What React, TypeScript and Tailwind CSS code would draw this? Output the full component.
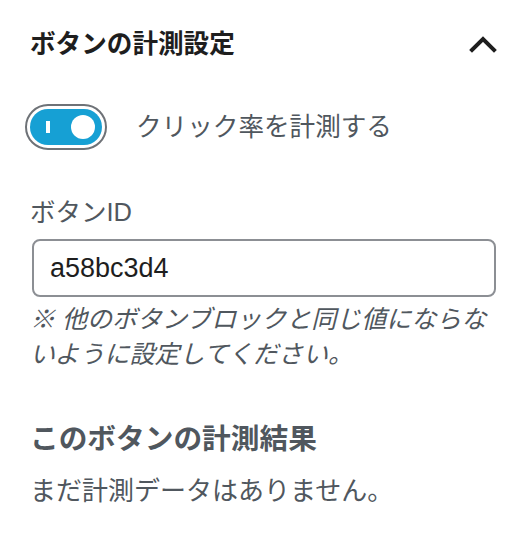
import React, { useState } from 'react';

const ChevronUp: React.FC = () => (
    <svg width="28" height="18" viewBox="0 0 28 18" fill="none">
        <polyline points="3,15 14,4 25,15" stroke="#1e1e1e" strokeWidth="4" strokeLinecap="square" />
    </svg>
);

const App: React.FC = () => {
    const [enabled, setEnabled] = useState(true);
    const [buttonId, setButtonId] = useState('a58bc3d4');

    return (
        <div
            className="w-[524px] h-[552px] bg-white pl-[30px] pr-[27px] pt-[28px] overflow-hidden"
            style={{ fontFamily: '"Liberation Sans", "Noto Sans CJK JP", sans-serif' }}
        >
            <div className="flex items-center justify-between h-[32px]">
                <h2 className="text-[25.6px] leading-[32px] font-bold text-[#1e1e1e]">ボタンの計測設定</h2>
                <ChevronUp />
            </div>

            <div className="flex items-center mt-[49px] h-[36px]">
                <button
                    onClick={() => setEnabled(!enabled)}
                    className="relative w-[72px] h-[36px] rounded-full bg-[#16a0d4] outline-[2px] outline-solid outline-[#6e7277] outline-offset-[3px] shrink-0"
                    aria-label="クリック率を計測する"
                >
                    <span className="absolute left-[16px] top-[12px] w-[4px] h-[12px] bg-white"></span>
                    <span className="absolute right-[7px] top-[6px] w-[24px] h-[24px] rounded-full bg-white"></span>
                </button>
                <span className="ml-[34px] text-[25.6px] leading-[36px] text-[#50575e]">クリック率を計測する</span>
            </div>

            <div className="mt-[53px] text-[25.5px] leading-[28px] text-[#50575e]">ボタンID</div>

            <input
                value={buttonId}
                onChange={e => setButtonId(e.target.value)}
                className="block mt-[13px] ml-[2px] w-[464px] h-[58px] border-2 border-[#8c8f94] rounded-[8px] pl-[16px] text-[27px] text-[#1e1e1e] outline-none"
            />

            <p className="mt-[5px] text-[25px] leading-[35px] italic text-[#50575e]">
                ※ 他のボタンブロックと同じ値にならな<br />いように設定してください。
            </p>

            <h3 className="mt-[50px] text-[28.7px] leading-[34px] font-bold text-[#50575e]">このボタンの計測結果</h3>

            <p className="mt-[18px] text-[26px] leading-[34px] text-[#50575e]">まだ計測データはありません。</p>
        </div>
    );
};

export default App;
